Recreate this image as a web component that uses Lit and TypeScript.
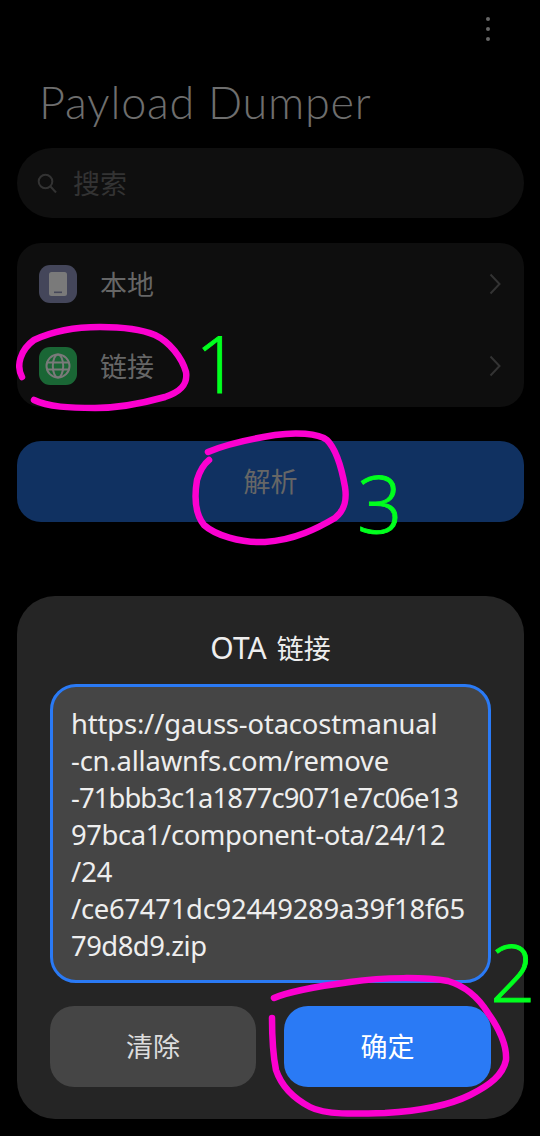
import { LitElement, html, css, svg } from "lit";
import { customElement } from "lit/decorators.js";

const CJK = `"Noto Sans", "Noto Sans CJK SC", sans-serif`;

const chevron = html`<svg class="chev" viewBox="0 0 12 22" fill="none" stroke="#333" stroke-width="2"><path d="M1.5 1.5 10.5 11 1.5 20.5"/></svg>`;

@customElement("app-root")
export class AppRoot extends LitElement {
  static styles = css`
    :host { display: block; position: relative; width: 540px; height: 1136px; background: #000; overflow: hidden; font-family: ${css([CJK] as any)}; }
    * { box-sizing: border-box; }
    .top { height: 58px; display: flex; justify-content: flex-end; padding: 17px 50px 0 0; }
    .dots { display: flex; flex-direction: column; gap: 6px; }
    .dots i { width: 4px; height: 4px; border-radius: 50%; background: #666; }
    h1 { margin: 0; height: 90px; padding: 19px 0 0 39px; font-size: 45px; line-height: 50px; font-weight: 300; color: #6e6e6e; font-family: "Lato", sans-serif; letter-spacing: 0.75px; }
    .search { margin: 0 16px 0 17px; height: 70px; border-radius: 35px; background: #0f0f0f; display: flex; align-items: center; padding: 0 0 2px 20px; gap: 16px; color: #333; font-size: 27px; }
    .search svg { width: 20px; height: 21px; margin-top: 2px; }
    .card { margin: 25px 16px 0 17px; height: 164px; border-radius: 24px; background: #0e0e0e; }
    .row { height: 82px; display: flex; align-items: center; padding: 0 22px; color: #666; font-size: 27px; }
    .ic { width: 38px; height: 38px; border-radius: 11px; display: flex; align-items: center; justify-content: center; margin-right: 23px; }
    .ic.phone { background: #44465a; }
    .ic.globe { background: #1a6635; }
    .ic svg { width: 38px; height: 38px; }
    .row span { flex: 1; line-height: 36px; padding-top: 2px; }
    .chev { width: 12px; height: 22px; margin-right: 1px; }
    .parse { margin: 34px 16px 0 17px; height: 81px; border-radius: 24px; background: #103161; color: #666; font-size: 27px; display: flex; align-items: center; justify-content: center; padding-bottom: 2px; }
    .dialog { margin: 74px 16px 0 17px; height: 523px; border-radius: 38px; background: #252525; padding: 33px 33px 0; }
    .title { height: 55px; display: flex; justify-content: center; align-items: baseline; gap: 10px; color: #eee; font-size: 27px; line-height: 38px; }
    .title b { font-weight: 400; font-size: 30px; }
    .area { height: 299px; border: 3px solid #2a7af5; border-radius: 26px; background: #454545; padding: 18px 0 0 18px; color: #eee; font-size: 27.4px; line-height: 37px; }
    .area div { white-space: nowrap; }
    .btns { display: flex; gap: 28px; margin-top: 23px; }
    .btn { width: 206px; height: 81px; border-radius: 24px; display: flex; align-items: center; justify-content: center; font-size: 27px; padding-bottom: 2px; }
    .btn.clear { background: #454545; color: #ddd; }
    .btn.ok { width: 207px; background: #2a7af5; color: #fff; }
    .ink { position: absolute; inset: 0; width: 540px; height: 1136px; pointer-events: none; filter: blur(0.5px); }
    .num { position: absolute; color: #00ff1e; font-family: "Open Sans", sans-serif; font-weight: 300; font-size: 80px; line-height: 80px; -webkit-text-stroke: 0.9px #00ff1e; }
    .n1 { left: 195px; top: 322px; }
    .n2 { left: 490px; top: 931px; }
    .n3 { left: 357px; top: 462px; }
  `;

  render() {
    const lines: [string, number][] = [
      ["https://gauss-otacostmanual", -0.15],
      ["-cn.allawnfs.com/remove", -0.18],
      ["-71bbb3c1a1877c9071e7c06e13", -0.9],
      ["97bca1/component-ota/24/12", -0.38],
      ["/24", 0],
      ["/ce67471dc92449289a39f18f65", -0.25],
      ["79d8d9.zip", -0.5],
    ];
    return html`
      <div class="top"><div class="dots"><i></i><i></i><i></i></div></div>
      <h1>Payload Dumper</h1>
      <div class="search">
        <svg viewBox="0 0 20 21" fill="none" stroke="#333" stroke-width="2"><circle cx="8.5" cy="8.5" r="6.8"/><path d="M13.5 13.5 19 19.5"/></svg>
        搜索
      </div>
      <div class="card">
        <div class="row">
          <div class="ic phone"><svg viewBox="0 0 38 38"><rect x="10" y="7" width="18" height="24" rx="2.5" fill="#7a7a7a"/><rect x="15" y="26.5" width="8" height="1.6" fill="#46485a"/></svg></div>
          <span>本地</span>${chevron}
        </div>
        <div class="row">
          <div class="ic globe"><svg viewBox="0 0 38 38" fill="none" stroke="#7a7a7a" stroke-width="2"><circle cx="19" cy="19" r="11.5"/><ellipse cx="19" cy="19" rx="5.2" ry="11.5"/><path d="M7.5 15.5h23M7.5 22.5h23"/></svg></div>
          <span>链接</span>${chevron}
        </div>
      </div>
      <div class="parse">解析</div>
      <div class="dialog">
        <div class="title"><b>OTA</b><span>链接</span></div>
        <div class="area">${lines.map(([l, s]) => html`<div style="letter-spacing:${s}px">${l}</div>`)}</div>
        <div class="btns">
          <div class="btn clear">清除</div>
          <div class="btn ok">确定</div>
        </div>
      </div>
      <svg class="ink" viewBox="0 0 540 1136" fill="none" stroke="#fb00d0" stroke-width="6.5" stroke-linecap="round" stroke-linejoin="round">
        ${svg`<path d="M22 377C16 366 20 350 34 340C55 330 75 327 100 327C125 327 143 330 155 335C170 342 182 358 186 372C188 385 180 392 165 397C140 404 120 408 95 408C70 408 48 407 34 400"/>`}
        ${svg`<path d="M208 452C222 446 250 439 275 435C295 432 318 433 327 440C337 450 342 470 345 487C347 500 345 510 335 518C318 528 295 540 265 542C240 543 215 535 204 525C196 515 194 498 197 480C200 470 204 464 209 460"/>`}
        ${svg`<path d="M274 998C290 991 320 986 350 982C385 977 425 977 448 981C465 986 478 997 488 1013C500 1030 507 1045 506 1060C503 1075 490 1085 470 1095C450 1105 420 1111 385 1113C355 1114 325 1115 310 1107C293 1098 281 1085 276 1070C273 1055 272 1035 272 1018"/>`}
      </svg>
      <div class="num n1">1</div>
      <div class="num n2">2</div>
      <div class="num n3">3</div>
    `;
  }
}
